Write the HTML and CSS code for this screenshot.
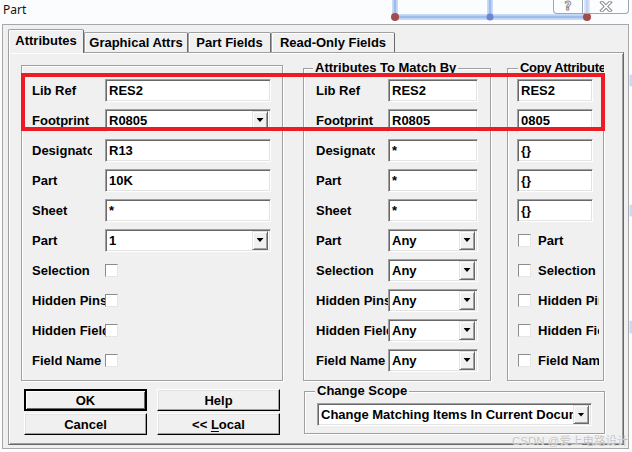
FILE: index.html
```html
<!DOCTYPE html>
<html>
<head>
<meta charset="utf-8">
<title>Part</title>
<link rel="stylesheet" href="styles.css">
</head>
<body>
<div class="window">
  <svg class="backdrop" width="632" height="452" viewBox="0 0 632 452">
    <g fill="none" stroke-linecap="round">
      <path d="M395 0 V17 H587 V0 M490 0 V17" stroke="#c9daf6" stroke-width="6"/>
      <path d="M395 0 V17 H587 V0 M490 0 V17" stroke="#9fbbee" stroke-width="2.5"/>
      <path d="M631 76 V85 M631 206 V215 M631 322 V332" stroke="#c9daf6" stroke-width="3"/>
    </g>
    <circle cx="395" cy="17" r="4" fill="#a54a4a"/>
    <circle cx="587" cy="17" r="4" fill="#a54a4a"/>
    <circle cx="490" cy="17" r="3.5" fill="#6a86cf"/>
  </svg>

  <div class="titlebar">
    <span class="title">Part</span>
    <div class="caption">
      <span class="cap cap-help">?</span>
      <span class="cap cap-close">
        <svg width="14" height="11" viewBox="0 0 14 11">
          <path d="M3 1.5 L11 9.5 M11 1.5 L3 9.5" stroke="#8a8a8a" stroke-width="3.6" stroke-linecap="square"/>
          <path d="M3 1.5 L11 9.5 M11 1.5 L3 9.5" stroke="#ffffff" stroke-width="1.6" stroke-linecap="square"/>
        </svg>
      </span>
    </div>
  </div>

  <div class="dialog">
    <div class="tabs">
      <div class="tab active tab-attr">Attributes</div>
      <div class="tab tab-graph">Graphical Attrs</div>
      <div class="tab tab-fields">Part Fields</div>
      <div class="tab tab-ro">Read-Only Fields</div>
    </div>

    <div class="page">
      <div class="groups">
        <div class="group g-main">
          <div class="row"><span class="lbl">Lib Ref</span><div class="field">RES2</div></div>
          <div class="row"><span class="lbl">Footprint</span><div class="field select"><span class="val">R0805</span><span class="ddbtn"></span></div></div>
          <div class="row"><span class="lbl cut">Designator</span><div class="field">R13</div></div>
          <div class="row"><span class="lbl">Part</span><div class="field">10K</div></div>
          <div class="row"><span class="lbl">Sheet</span><div class="field">*</div></div>
          <div class="row"><span class="lbl">Part</span><div class="field select"><span class="val">1</span><span class="ddbtn"></span></div></div>
          <div class="row"><span class="lbl">Selection</span><span class="chk"></span></div>
          <div class="row"><span class="lbl">Hidden Pins</span><span class="chk"></span></div>
          <div class="row"><span class="lbl">Hidden Fields</span><span class="chk"></span></div>
          <div class="row"><span class="lbl">Field Name</span><span class="chk"></span></div>
        </div>

        <div class="group g-match">
          <div class="gtitle">Attributes To Match By</div>
          <div class="row"><span class="lbl">Lib Ref</span><div class="field">RES2</div></div>
          <div class="row"><span class="lbl">Footprint</span><div class="field">R0805</div></div>
          <div class="row"><span class="lbl cut">Designator</span><div class="field">*</div></div>
          <div class="row"><span class="lbl">Part</span><div class="field">*</div></div>
          <div class="row"><span class="lbl">Sheet</span><div class="field">*</div></div>
          <div class="row"><span class="lbl">Part</span><div class="field select"><span class="val">Any</span><span class="ddbtn"></span></div></div>
          <div class="row"><span class="lbl">Selection</span><div class="field select"><span class="val">Any</span><span class="ddbtn"></span></div></div>
          <div class="row"><span class="lbl">Hidden Pins</span><div class="field select"><span class="val">Any</span><span class="ddbtn"></span></div></div>
          <div class="row"><span class="lbl">Hidden Fields</span><div class="field select"><span class="val">Any</span><span class="ddbtn"></span></div></div>
          <div class="row"><span class="lbl">Field Name</span><div class="field select"><span class="val">Any</span><span class="ddbtn"></span></div></div>
        </div>

        <div class="group g-copy">
          <div class="gtitle">Copy Attributes</div>
          <div class="row"><div class="field">RES2</div></div>
          <div class="row"><div class="field">0805</div></div>
          <div class="row"><div class="field">{}</div></div>
          <div class="row"><div class="field">{}</div></div>
          <div class="row"><div class="field">{}</div></div>
          <div class="row"><span class="chk"></span><span class="lbl">Part</span></div>
          <div class="row"><span class="chk"></span><span class="lbl">Selection</span></div>
          <div class="row"><span class="chk"></span><span class="lbl">Hidden Pins</span></div>
          <div class="row"><span class="chk"></span><span class="lbl">Hidden Fields</span></div>
          <div class="row"><span class="chk"></span><span class="lbl">Field Name</span></div>
        </div>
      </div>

      <div class="bottom">
        <div class="buttons">
          <div class="btn default"><span>OK</span></div>
          <div class="btn"><span>Help</span></div>
          <div class="btn"><span>Cancel</span></div>
          <div class="btn"><span>&lt;&lt; <u>L</u>ocal</span></div>
        </div>
        <div class="group g-scope">
          <div class="gtitle">Change Scope</div>
          <div class="field select"><span class="val">Change Matching Items In Current Document</span><span class="ddbtn"></span></div>
        </div>
      </div>
    </div>
  </div>

  <div class="highlight"></div>
  <div class="watermark">CSDN @爱上电路设计</div>
</div>
</body>
</html>
```

FILE: styles.css
```css
* { box-sizing: border-box; }
html, body { margin: 0; padding: 0; }
body {
  width: 632px;
  height: 452px;
  overflow: hidden;
  background: #fbfcfe;
  font-family: "Liberation Sans", Arial, sans-serif;
  font-size: 13px;
  font-weight: bold;
  color: #000;
}
.window { position: relative; width: 632px; height: 452px; }
.backdrop { position: absolute; left: 0; top: 0; }

/* title bar */
.titlebar { position: relative; height: 24px; display: flex; align-items: flex-start; }
.title {
  font-family: "Noto Sans", "Open Sans", sans-serif;
  font-weight: normal;
  font-size: 12px;
  line-height: 20px;
  padding-left: 3px;
  color: #111;
}
.caption {
  margin-left: auto;
  margin-right: 3px;
  display: flex;
  height: 15px;
  margin-top: -1px;
  border: 1px solid #9ea6b0;
  border-top: none;
  border-radius: 0 0 4px 4px;
  background: rgba(255, 255, 255, 0.35);
}
.cap { display: flex; align-items: center; justify-content: center; height: 14px; }
.cap-help {
  width: 29px;
  border-right: 1px solid #9ea6b0;
  font-family: "DejaVu Sans", sans-serif;
  font-size: 12px;
  color: #fff;
  -webkit-text-stroke: 0.9px #8a8a8a;
}
.cap-close { width: 45px; }

/* dialog */
.dialog {
  position: relative;
  margin-left: 2px;
  width: 627px;
  height: 425px;
  background: #f0f0f0;
  border: 1px solid #a8a8a8;
  padding: 4px 0 0 5px;
}
.tabs {
  display: flex;
  align-items: flex-end;
  height: 24px;
  margin-bottom: -1px;
  position: relative;
  z-index: 1;
}
.tab {
  height: 20px;
  margin-bottom: 1px;
  border: 1px solid #a0a0a0;
  border-bottom: none;
  border-right-color: #696969;
  border-radius: 2px 2px 0 0;
  box-shadow: inset 1px 1px #fff;
  background: #f0f0f0;
  display: flex;
  align-items: center;
  justify-content: center;
  white-space: nowrap;
}
.tab.active { height: 24px; margin-bottom: 0; padding-bottom: 3px; }
.tab-attr { width: 76px; }
.tab-graph { width: 104px; }
.tab-fields { width: 83px; }
.tab-ro { width: 124px; }

.page {
  position: relative;
  width: 616px;
  height: 393px;
  border: 1px solid;
  border-color: #a0a0a0 #696969 #696969 #a0a0a0;
  box-shadow: inset 1px 1px #fff, inset -1px -1px #a0a0a0;
  padding: 8px 0 0 12px;
}

/* groups */
.groups { display: flex; align-items: flex-end; height: 320px; }
.group {
  border: 1px solid #a0a0a0;
  box-shadow: inset 1px 1px #fff, 1px 1px #fff;
}
.gtitle {
  width: fit-content;
  margin-top: -8px;
  padding: 0 2px;
  line-height: 14px;
  background: #f0f0f0;
  white-space: nowrap;
}
.g-main { width: 262px; height: 316px; padding: 9px 0 0 10px; }
.g-match { width: 188px; height: 313px; margin-left: 20px; padding-left: 12px; }
.g-copy { width: 97px; height: 313px; margin-left: 16px; padding-left: 9px; }
.g-match .gtitle { margin-left: -3px; }
.g-copy .gtitle {
  margin-left: 1px;
  max-width: 86px;
  padding-right: 0;
  overflow: hidden;
  letter-spacing: -0.3px;
}

.row { display: flex; align-items: center; height: 30px; }
.lbl { flex: none; white-space: nowrap; overflow: hidden; }
.g-main .lbl { width: 73px; }
.g-match .lbl { width: 72px; }
.g-main .lbl.cut { width: 60px; margin-right: 13px; }
.g-match .lbl.cut { width: 59px; margin-right: 13px; }
.g-copy .lbl { width: 61px; margin-left: 7px; }

.field {
  flex: none;
  height: 23px;
  background: #fff;
  border: 1px solid;
  border-color: #a0a0a0 #fff #fff #a0a0a0;
  box-shadow: inset 1px 1px #696969, inset -1px -1px #e3e3e3;
  padding-left: 3px;
  display: flex;
  align-items: center;
  white-space: nowrap;
  overflow: hidden;
}
.g-main .field { width: 166px; }
.g-match .field { width: 90px; }
.g-copy .field { width: 76px; }

.select { padding-right: 2px; }
.select .val { flex: 1; overflow: hidden; white-space: nowrap; }
.ddbtn {
  flex: none;
  width: 16px;
  height: 19px;
  background: #f0f0f0;
  border: 1px solid;
  border-color: #e3e3e3 #696969 #696969 #e3e3e3;
  box-shadow: inset 1px 1px #fff, inset -1px -1px #a0a0a0;
  display: flex;
  align-items: center;
  justify-content: center;
}
.ddbtn::after {
  content: "";
  width: 7px;
  height: 4px;
  background: #000;
  clip-path: polygon(0 0, 100% 0, 50% 100%);
}

.chk {
  flex: none;
  width: 13px;
  height: 13px;
  background: #fff;
  border: 1px solid;
  border-color: #8c8c8c #e6e6e6 #e6e6e6 #8c8c8c;
}
.g-copy .chk { margin-left: 1px; }

/* bottom */
.bottom { display: flex; align-items: flex-start; }
.buttons {
  display: grid;
  grid-template-columns: 123px 123px;
  grid-auto-rows: 22px;
  column-gap: 10px;
  row-gap: 2px;
  margin: 8px 0 0 3px;
}
.btn {
  display: flex;
  align-items: center;
  justify-content: center;
  background: #f0f0f0;
  border: 1px solid;
  border-color: #fff #000 #000 #fff;
  box-shadow: inset -1px -1px #a0a0a0, inset 1px 1px #e3e3e3;
  white-space: pre;
}
.btn.default {
  border: 2px solid #000;
  box-shadow: inset 1px 1px #fff, inset -1px -1px #696969;
}
.btn u { text-decoration-thickness: 1px; text-underline-offset: 2px; }

.g-scope { width: 301px; height: 43px; margin: 10px 0 0 24px; padding-left: 12px; }
.g-scope .gtitle { margin-left: -2px; }
.g-scope .field { width: 275px; margin-top: 5px; }

/* overlays */
.highlight {
  position: absolute;
  left: 21px;
  top: 73px;
  width: 584px;
  height: 58px;
  border: 4px solid #ed1c24;
}
.watermark {
  position: absolute;
  left: 512px;
  top: 435px;
  font-family: "Liberation Sans", "Noto Sans CJK SC", sans-serif;
  font-weight: normal;
  font-size: 11.5px;
  line-height: 13px;
  color: #c4c4c4;
  text-shadow: 0 0 1px #fff;
  white-space: nowrap;
}
```
